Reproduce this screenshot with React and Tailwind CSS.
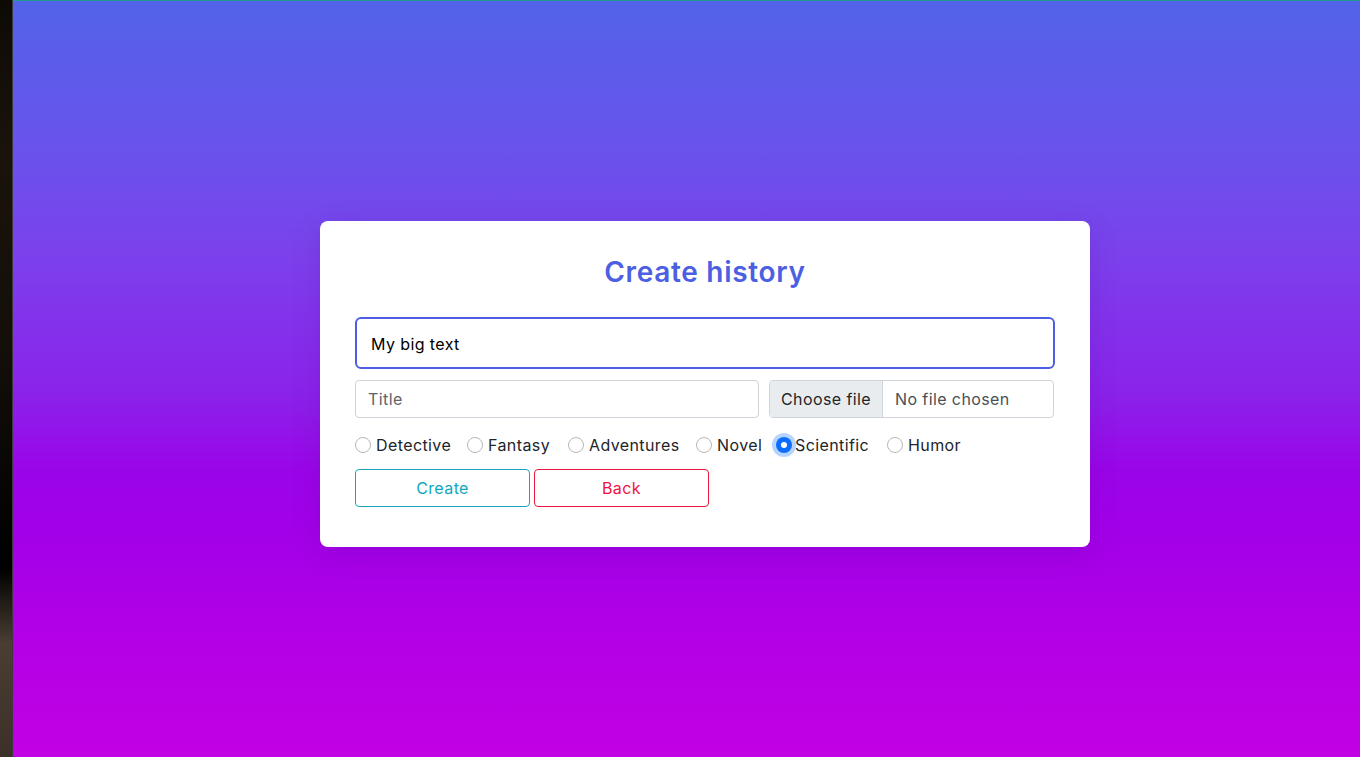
import React from "react";

const genres = [
  { name: "Detective", w: "w-[112px]" },
  { name: "Fantasy", w: "w-[101px]" },
  { name: "Adventures", w: "w-[128px]" },
  { name: "Novel", w: "w-[80px]" },
  { name: "Scientific", w: "w-[111px]", checked: true },
  { name: "Humor", w: "w-[100px]" },
];

export default function App() {
  return (
    <div className="flex h-[757px] w-[1360px] overflow-hidden font-['Inter','Liberation_Sans',sans-serif] tracking-[0.4px]">
      <div className="w-[13px] shrink-0 border-r border-[#3a3a3a] bg-[linear-gradient(to_bottom,#0d0a06_0%,#1a130c_20%,#140f09_45%,#0a0806_60%,#000000_75%,#4a3e32_85%,#3c3128_100%)]" />
      <div className="flex-1 border-t border-[#1f9a8c] bg-[linear-gradient(to_bottom,#5263e8_0%,#6a52ec_20%,#7c40ec_34%,#8b22ea_52%,#9a05e8_62%,#a200e8_70%,#b400e6_85%,#c200e4_100%)] pl-[307px] pt-[220px]">
        <div className="w-[770px] rounded-lg bg-white px-[35px] pt-[30px] pb-[40px] shadow-[0_8px_30px_rgba(60,0,120,0.15)]">
          <h1 className="text-center text-[28px] leading-[42px] font-semibold tracking-[0.7px] text-[#4c5fe3]">
            Create history
          </h1>
          <div className="mt-[24px] flex h-[52px] items-center rounded-md border-2 border-[#4e5ee4] px-[14px] pt-[1px] text-[16px] text-black">
            My big text
          </div>
          <div className="mt-[11px] flex">
            <div className="flex h-[38px] w-[404px] items-center rounded border border-[#ced4da] px-3 text-[16px] text-[#5c636a]">
              Title
            </div>
            <div className="ml-[10px] flex h-[38px] w-[285px] overflow-hidden rounded border border-[#ced4da] text-[16px]">
              <div className="flex w-[113px] items-center justify-center border-r border-[#ced4da] bg-[#e9ecef] text-[#212529]">
                Choose file
              </div>
              <div className="flex items-center pl-3 text-[#495057]">No file chosen</div>
            </div>
          </div>
          <div className="mt-[15px] flex h-[24px] items-center text-[16px] text-[#212529]">
            {genres.map((g) => (
              <div key={g.name} className={`flex items-center ${g.w}`}>
                {g.checked ? (
                  <span className="flex h-4 w-4 items-center justify-center rounded-full bg-[#0d6efd] shadow-[0_0_0_4px_#b6d4fe]">
                    <span className="h-[6px] w-[6px] rounded-full bg-white" />
                  </span>
                ) : (
                  <span className="h-4 w-4 rounded-full border border-[#b8b8b8] bg-white" />
                )}
                <span className={g.checked ? "ml-[3px]" : "ml-[5px]"}>{g.name}</span>
              </div>
            ))}
          </div>
          <div className="mt-[12px] flex gap-[4px]">
            <button className="h-[38px] w-[175px] rounded border border-[#17a6bd] pb-[1px] text-[16px] text-[#10a7bf]">
              Create
            </button>
            <button className="h-[38px] w-[175px] rounded border border-[#ec1641] pb-[1px] text-[16px] text-[#ef1240]">
              Back
            </button>
          </div>
        </div>
      </div>
    </div>
  );
}
